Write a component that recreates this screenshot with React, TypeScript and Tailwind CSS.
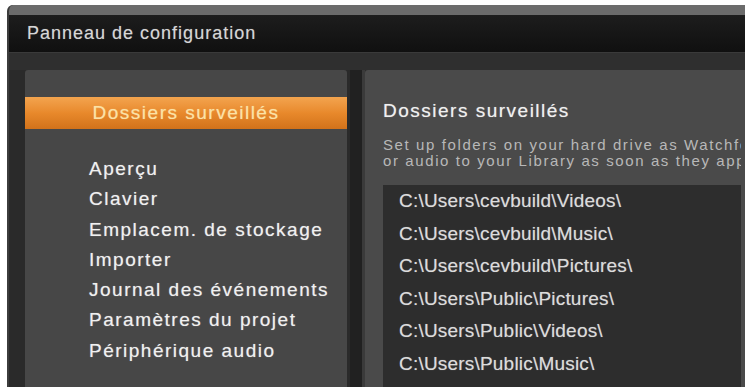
const sections = [
  "Aperçu",
  "Clavier",
  "Emplacem. de stockage",
  "Importer",
  "Journal des événements",
  "Paramètres du projet",
  "Périphérique audio",
];

const folders = [
  "C:\\Users\\cevbuild\\Videos\\",
  "C:\\Users\\cevbuild\\Music\\",
  "C:\\Users\\cevbuild\\Pictures\\",
  "C:\\Users\\Public\\Pictures\\",
  "C:\\Users\\Public\\Videos\\",
  "C:\\Users\\Public\\Music\\",
];

export default function App() {
  return (
    <div className="h-[387px] w-[745px] overflow-hidden bg-white pl-[7px] pt-[5px] font-['Liberation_Sans',Arial,sans-serif]">
      <div className="flex h-full flex-col overflow-hidden rounded-tl-[6px] border-l-2 border-[#3c3c3c] bg-[#2a2a2a]">
        {/* title bar */}
        <div className="h-[47px] shrink-0 border-t-[10px] border-[#6b6b6b] bg-gradient-to-b from-[#1d1d1d] to-[#101010] pl-[18px] text-[18px] leading-[37px] tracking-[1px] text-[#d6d6d6] [text-shadow:0_0_1px_rgba(255,255,255,0.35)]">
          Panneau de configuration
        </div>
        <div className="h-[18px] shrink-0 border-t border-[#3a3a3a] bg-[#2f2f2f]" />

        <div className="flex min-h-0 flex-1 pl-[16px]">
          {/* left nav */}
          <div className="w-[322px] shrink-0 rounded-t-[3px] bg-[#474747] pt-[27px]">
            <div className="h-[32px] bg-gradient-to-b from-[#f3a44e] via-[#e8892b] to-[#d2721a] text-center text-[19px] leading-[32px] tracking-[1.5px] text-[#fbe2a6] [text-shadow:0_0_1px_rgba(255,240,200,0.5)]">
              Dossiers surveillés
            </div>
            <ul className="mt-[25px] pl-[64px] text-[19px] leading-[30.3px] tracking-[1.5px] text-[#f0f0f0] [text-shadow:0_0_1px_rgba(255,255,255,0.5)]">
              {sections.map((s) => (
                <li key={s} className="whitespace-nowrap">
                  {s}
                </li>
              ))}
            </ul>
          </div>

          {/* splitter */}
          <div className="flex w-[18px] shrink-0">
            <div className="w-[3px] bg-[#2a2a2a]" />
            <div className="w-[12px] bg-[#212121]" />
            <div className="w-[3px] bg-[#3a3a3a]" />
          </div>

          {/* right pane */}
          <div className="flex min-w-0 flex-1 flex-col overflow-hidden rounded-tl-[3px] bg-[#4a4a4a] pl-[18px] pr-[4px] pt-[29px]">
            <h2 className="whitespace-nowrap text-[19px] leading-[24px] tracking-[1.5px] text-[#f0f0f0] [text-shadow:0_0_1px_rgba(255,255,255,0.5)]">
              Dossiers surveillés
            </h2>
            <div className="mt-[14px] overflow-hidden text-[15px] leading-[16px] tracking-[1.6px] text-[#b8b8b8]">
              <p className="whitespace-nowrap">
                Set up folders on your hard drive as Watchfolders to have Studio
              </p>
              <p className="whitespace-nowrap">
                or audio to your Library as soon as they appear.
              </p>
            </div>
            <ul className="mt-[16px] flex-1 bg-[#2d2d2d] pl-[16px] text-[19px] leading-[32.6px] tracking-[0.2px] text-[#dcdcdc] [text-shadow:0_0_1px_rgba(255,255,255,0.4)]">
              {folders.map((f) => (
                <li key={f} className="whitespace-nowrap">
                  {f}
                </li>
              ))}
            </ul>
          </div>
        </div>
      </div>
    </div>
  );
}
